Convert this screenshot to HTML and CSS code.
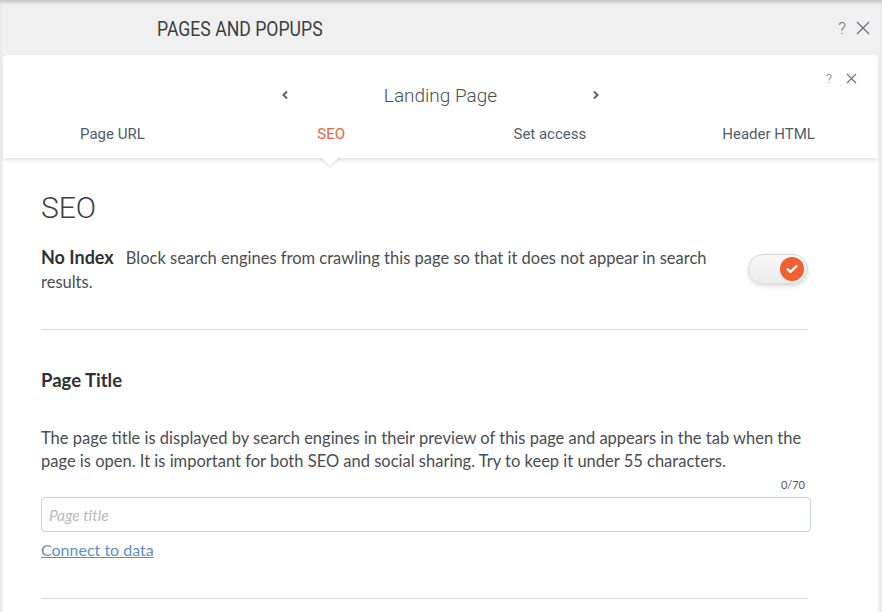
FILE: index.html
```html
<!DOCTYPE html>
<html>
<head>
<meta charset="utf-8">
<link rel="stylesheet" href="styles.css">
</head>
<body>
<div class="topbar">
  <div class="top-title">PAGES AND POPUPS</div>
  <div class="top-icons">
    <span class="q">?</span>
    <svg class="x" width="14" height="14" viewBox="0 0 14 14"><path d="M1 1L13 13M13 1L1 13" stroke="#6b747c" stroke-width="1.3" fill="none"/></svg>
  </div>
</div>
<div class="panel">
  <div class="panel-head">
    <div class="head-icons">
      <span class="q small">?</span>
      <svg class="x" width="11" height="11" viewBox="0 0 11 11"><path d="M1 1L10 10M10 1L1 10" stroke="#6b747c" stroke-width="1.1" fill="none"/></svg>
    </div>
    <div class="pager">
      <svg class="chev" width="8" height="10" viewBox="0 0 8 10"><path d="M6 1.5L2.5 5L6 8.5" stroke="#59656f" stroke-width="2" fill="none"/></svg>
      <span class="pager-title">Landing Page</span>
      <svg class="chev" width="8" height="10" viewBox="0 0 8 10"><path d="M2 1.5L5.5 5L2 8.5" stroke="#59656f" stroke-width="2" fill="none"/></svg>
    </div>
    <div class="tabs">
      <div class="tab">Page URL</div>
      <div class="tab active">SEO<span class="notch"></span></div>
      <div class="tab">Set access</div>
      <div class="tab">Header HTML</div>
    </div>
  </div>
  <div class="content">
    <h1 class="h1">SEO</h1>
    <div class="noindex">
      <p class="noindex-text"><b class="noindex-label">No Index</b><span class="noindex-desc">Block search engines from crawling this page so that it does not appear in search </span><span class="noindex-desc">results.</span></p>
      <div class="toggle"><span class="knob"><svg width="12" height="10" viewBox="0 0 12 10"><path d="M1.5 5.2L4.5 8L10.5 2" stroke="#fff" stroke-width="2.4" fill="none" stroke-linecap="round" stroke-linejoin="round"/></svg></span></div>
    </div>
    <hr class="divider">
    <h2 class="h2">Page Title</h2>
    <p class="desc">The page title is displayed by search engines in their preview of this page and appears in the tab when the page is open. It is important for both SEO and social sharing. Try to keep it under 55 characters.</p>
    <div class="field">
      <div class="counter">0/70</div>
      <input class="input" type="text" placeholder="Page title">
      <a class="link" href="#">Connect to data</a>
    </div>
    <hr class="divider bottom">
  </div>
</div>
</body>
</html>
```
FILE: styles.css
```css
html, body { margin: 0; padding: 0; }
body {
  background: #f0f0f0;
  font-family: "Lato", "Liberation Sans", sans-serif;
  width: 882px;
  height: 612px;
  overflow: hidden;
  box-shadow: inset 0 4px 4px -2px rgba(0,0,0,0.22);
}
.topbar {
  height: 55px;
  display: flex;
  align-items: center;
  position: relative;
}
.top-title {
  margin-left: 157px;
  font-family: "Roboto", sans-serif;
  font-size: 20.5px;
  color: #3c3f42;
  padding-top: 2px;
  transform: scaleX(0.86);
  transform-origin: left center;
  white-space: nowrap;
}
.top-icons {
  margin-left: auto;
  margin-right: 12px;
  display: flex;
  align-items: center;
  gap: 10px;
}
.q {
  font-family: "Roboto", sans-serif;
  font-size: 17px;
  color: #6b747c;
  font-weight: 300;
}
.q.small { font-size: 13px; }
.panel {
  margin: 0 4px 0 3px;
  background: #fff;
  border-radius: 5px 5px 0 0;
  height: 557px;
}
.panel-head {
  height: 103px;
  position: relative;
  box-shadow: 0 3px 4px -1px rgba(0,0,0,0.13);
  z-index: 1;
  border-radius: 5px 5px 0 0;
  background: #fff;
}
.head-icons {
  position: absolute;
  right: 21px;
  top: 16px;
  display: flex;
  align-items: center;
  gap: 14px;
}
.pager {
  display: flex;
  justify-content: center;
  align-items: center;
  padding-top: 27px;
  height: 26px;
}
.chev { display: block; }
.pager-title {
  font-family: "Roboto", sans-serif;
  font-weight: 300;
  font-size: 19px;
  color: #4a4d50;
  width: 303px;
  text-align: center;
}
.tabs {
  display: grid;
  grid-template-columns: repeat(4, 1fr);
  margin-top: 16px;
}
.tab {
  text-align: center;
  font-family: "Roboto", sans-serif;
  font-size: 15px;
  color: #4e5d6b;
  position: relative;
  height: 34px;
  line-height: 20px;
}
.tab.active { color: #f4623a; }
.notch {
  position: absolute;
  left: 50%;
  top: 23px;
  width: 16px;
  height: 16px;
  margin-left: -9px;
  background: #fff;
  transform: rotate(45deg);
  box-shadow: 2px 2px 3px -1px rgba(0,0,0,0.12);
}
.content {
  padding: 0 70px 0 38px;
  position: relative;
}
.h1 {
  margin: 0;
  padding-top: 32px;
  font-family: "Roboto", sans-serif;
  font-weight: 300;
  font-size: 30px;
  line-height: 36px;
  color: #3c3f42;
}
.noindex {
  display: flex;
  align-items: flex-start;
  margin-top: 20px;
}
.noindex-text {
  margin: 0;
  flex: 1;
  font-size: 16.5px;
  line-height: 24px;
  color: #4a4d50;
  padding-right: 25px;
}
.noindex-label {
  font-size: 18px;
  line-height: 20px;
  color: #2f3235;
  margin-right: 12px;
}
.noindex-desc { line-height: 20px; }
.toggle {
  width: 58px;
  height: 28px;
  margin-top: 8px;
  border-radius: 15px;
  border: 1px solid #d6dadd;
  background: linear-gradient(#f7f7f7, #ececec);
  box-shadow: 0 2px 4px rgba(0,0,0,0.15);
  position: relative;
  margin-left: 1px;
}
.knob {
  position: absolute;
  right: 3px;
  top: 2px;
  width: 24px;
  height: 24px;
  border-radius: 50%;
  background: #f25d32;
  display: flex;
  align-items: center;
  justify-content: center;
}
.divider {
  margin: 35px 0 0 0;
  border: none;
  border-top: 1.5px solid #d8d8d8;
  height: 0;
}
.h2 {
  margin: 0;
  padding-top: 38px;
  font-size: 18.5px;
  font-weight: 700;
  color: #2f3235;
  line-height: 24px;
}
.desc {
  margin: 35px 0 0 0;
  font-size: 16.5px;
  line-height: 23px;
  color: #4a4d50;
}
.field {
  margin-right: -3px;
}
.counter {
  text-align: right;
  font-size: 11px;
  color: #555;
  margin-top: 5px;
  padding-right: 6px;
  line-height: 14px;
}
.input {
  display: block;
  box-sizing: border-box;
  width: 100%;
  height: 35px;
  margin-top: 5px;
  border: 1px solid #c9cfd4;
  border-radius: 4px;
  padding: 0 7px;
  font-family: "Lato", sans-serif;
  font-size: 15.5px;
  outline: none;
}
.input::placeholder { color: #b9b9b9; font-style: italic; }
.link {
  display: inline-block;
  margin-top: 8px;
  font-size: 16px;
  color: #5b8fc7;
  text-decoration: underline;
}
.divider.bottom { margin-top: 39px; }
```
